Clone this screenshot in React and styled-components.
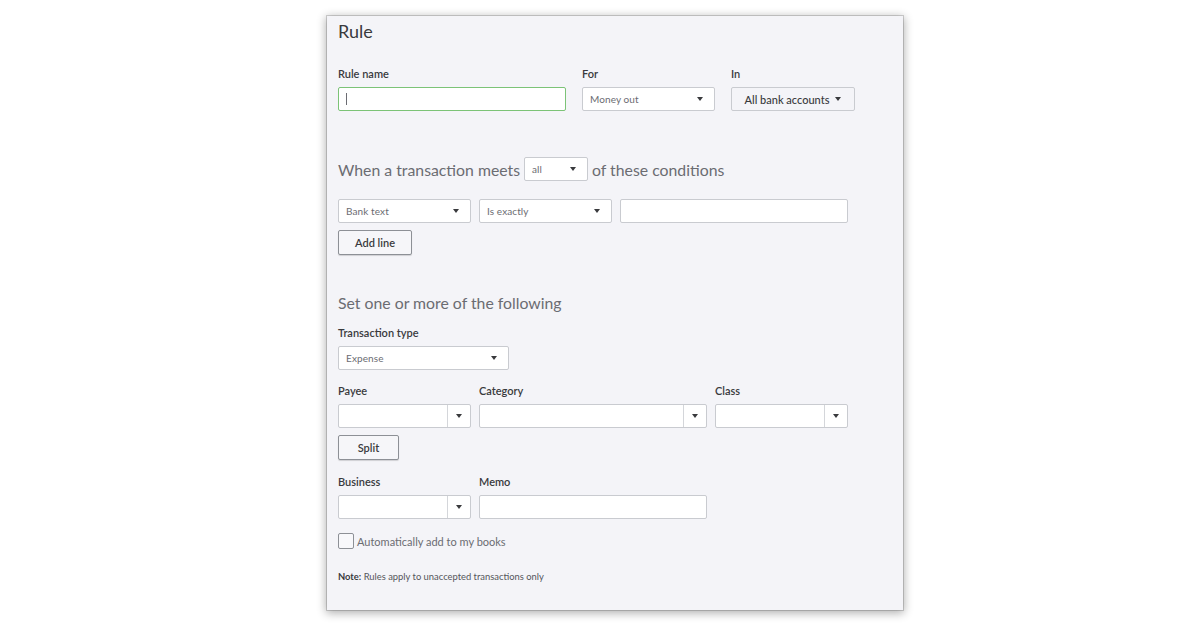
import React from "react";
import styled, { createGlobalStyle } from "styled-components";

const Global = createGlobalStyle`
  html, body { margin: 0; padding: 0; background: #ffffff; }
  body { font-family: Lato, "Open Sans", sans-serif; color: #393a3d; }
`;

const Page = styled.div`
  width: 1200px;
  height: 628px;
  padding: 16px 0 0 327px;
  box-sizing: border-box;
`;

const Panel = styled.div`
  width: 576px;
  height: 594px;
  box-sizing: border-box;
  background: #f4f4f8;
  padding: 4px 0 0 11px;
  box-shadow: 0 0 0 1px rgba(0,0,0,0.16), 0 2px 9px 1px rgba(0,0,0,0.32);
  display: flex;
  flex-direction: column;
`;

const Title = styled.h1`
  margin: 0;
  font-size: 18px;
  line-height: 22px;
  font-weight: 400;
  color: #393a3d;
`;

const Row = styled.div`
  display: flex;
  align-items: ${p => p.$align || "flex-start"};
  gap: ${p => p.$gap || 8}px;
  margin-top: ${p => p.$mt || 0}px;
`;

const Field = styled.div`
  display: flex;
  flex-direction: column;
  width: ${p => p.$w}px;
`;

const Label = styled.label`
  font-size: 11px;
  line-height: 14px;
  font-weight: 600;
  color: #393a3d;
  margin-bottom: 6px;
`;

const Box = styled.div`
  box-sizing: border-box;
  height: 24px;
  width: ${p => (p.$w ? p.$w + "px" : "100%")};
  background: #ffffff;
  border: 1px solid ${p => (p.$focus ? "#7cc377" : "#c9cbd0")};
  border-radius: 2px;
  display: flex;
  align-items: center;
`;

const Cursor = styled.span`
  display: block;
  width: 1px;
  height: 12px;
  background: #6b6c72;
  margin-left: 7px;
`;

const SelectText = styled.span`
  flex: 1;
  font-size: 10px;
  color: #6b6c72;
  padding-left: 7px;
  letter-spacing: 0.1px;
`;

const Caret = styled.span`
  width: 0;
  height: 0;
  border-left: 3.5px solid transparent;
  border-right: 3.5px solid transparent;
  border-top: 4px solid #393a3d;
  margin-right: ${p => p.$mr ?? 11}px;
`;

const ComboInput = styled.span`
  flex: 1;
  height: 100%;
  border-right: 1px solid #d4d6da;
`;

const ComboBtn = styled.span`
  width: 22px;
  display: flex;
  justify-content: center;
  align-items: center;
`;

const GhostButton = styled.button`
  box-sizing: border-box;
  height: 24px;
  width: ${p => p.$w}px;
  background: #f4f4f8;
  border: 1px solid #c9cbd0;
  border-radius: 2px;
  font-family: inherit;
  font-size: 11px;
  font-weight: 500;
  color: #393a3d;
  display: flex;
  align-items: center;
  justify-content: center;
  gap: 6px;
  padding: 0;
`;

const Button = styled.button`
  box-sizing: border-box;
  height: 25px;
  width: ${p => p.$w}px;
  margin-top: 7px;
  background: #f6f6f9;
  border: 1px solid #8d9096;
  border-radius: 2px;
  box-shadow: 0 1px 1px rgba(0,0,0,0.15);
  font-family: inherit;
  font-size: 11px;
  font-weight: 600;
  color: #393a3d;
  padding: 0;
`;

const Heading = styled.div`
  font-size: 15.8px;
  line-height: 20px;
  color: #6b6c72;
  margin-top: ${p => p.$mt || 0}px;
`;

const Inline = styled.span`
  font-size: 15.8px;
  color: #6b6c72;
`;

const CheckRow = styled.label`
  display: flex;
  align-items: center;
  gap: 3px;
  margin-top: 14px;
  font-size: 11px;
  color: #6b6c72;
`;

const CheckBox = styled.span`
  box-sizing: border-box;
  width: 16px;
  height: 16px;
  border: 1px solid #8d9096;
  border-radius: 2px;
  background: #f8f8fb;
`;

const Note = styled.div`
  margin-top: 22px;
  font-size: 9.4px;
  line-height: 11px;
  color: #55565b;
  b { font-weight: 700; color: #393a3d; }
`;

const Select = ({ w, text }) => (
  <Box $w={w}>
    <SelectText>{text}</SelectText>
    <Caret />
  </Box>
);

const Combo = ({ w }) => (
  <Box $w={w}>
    <ComboInput />
    <ComboBtn><Caret $mr={0} /></ComboBtn>
  </Box>
);

export default function App() {
  return (
    <>
      <Global />
      <Page>
        <Panel>
          <Title>Rule</Title>
          <Row $mt={25} $gap={16}>
            <Field $w={228}>
              <Label>Rule name</Label>
              <Box $focus><Cursor /></Box>
            </Field>
            <Field $w={133}>
              <Label>For</Label>
              <Select text="Money out" />
            </Field>
            <Field $w={124}>
              <Label>In</Label>
              <GhostButton $w={124}>All bank accounts <Caret $mr={0} /></GhostButton>
            </Field>
          </Row>

          <Row $mt={46} $align="center" $gap={4}>
            <Inline>When a transaction meets</Inline>
            <Select w={64} text="all" />
            <Inline>of these conditions</Inline>
          </Row>

          <Row $mt={18}>
            <Select w={133} text="Bank text" />
            <Select w={133} text="Is exactly" />
            <Box $w={228} />
          </Row>
          <Button $w={74}>Add line</Button>

          <Heading $mt={38}>Set one or more of the following</Heading>
          <Row $mt={13}>
            <Field $w={171}>
              <Label>Transaction type</Label>
              <Select text="Expense" />
            </Field>
          </Row>

          <Row $mt={14}>
            <Field $w={133}>
              <Label>Payee</Label>
              <Combo />
            </Field>
            <Field $w={228}>
              <Label>Category</Label>
              <Combo />
            </Field>
            <Field $w={133}>
              <Label>Class</Label>
              <Combo />
            </Field>
          </Row>
          <Button $w={61}>Split</Button>

          <Row $mt={15}>
            <Field $w={133}>
              <Label>Business</Label>
              <Combo />
            </Field>
            <Field $w={228}>
              <Label>Memo</Label>
              <Box />
            </Field>
          </Row>

          <CheckRow>
            <CheckBox />
            Automatically add to my books
          </CheckRow>

          <Note><b>Note:</b> Rules apply to unaccepted transactions only</Note>
        </Panel>
      </Page>
    </>
  );
}
